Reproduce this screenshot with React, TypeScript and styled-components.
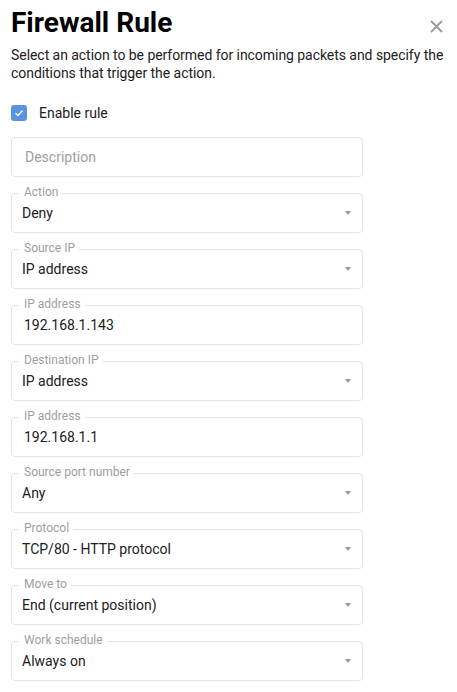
import React from "react";
import styled, { createGlobalStyle } from "styled-components";

const Global = createGlobalStyle`
  html, body { margin: 0; padding: 0; background: #fff; }
  body { font-family: Roboto, "Liberation Sans", Arial, sans-serif; color: #212121; }
  * { box-sizing: border-box; }
`;

const Page = styled.div`
  padding: 5px 14px 12px 11px;
  display: flex;
  flex-direction: column;
`;

const Header = styled.div`
  display: flex;
  justify-content: space-between;
  align-items: center;
`;

const Title = styled.h1`
  margin: 0;
  font-size: 28px;
  line-height: 36px;
  font-weight: 700;
  color: #000;
`;

const CloseButton = styled.button`
  border: none;
  background: none;
  padding: 0;
  width: 14px;
  height: 14px;
  margin-top: 6px;
  display: flex;
  align-items: center;
  justify-content: center;
  cursor: pointer;
`;

const Intro = styled.p`
  margin: 5px -14px 0 0;
  font-size: 14px;
  line-height: 18px;
  letter-spacing: -0.05px;
  color: #212121;
`;

const CheckRow = styled.label`
  display: flex;
  align-items: center;
  gap: 12px;
  height: 24px;
  margin-top: 19px;
  font-size: 14px;
  color: #212121;
`;

const CheckBox = styled.span`
  width: 16px;
  height: 16px;
  border-radius: 3px;
  background: #5b93e3;
  display: flex;
  align-items: center;
  justify-content: center;
`;

const Fields = styled.div`
  display: flex;
  flex-direction: column;
  gap: 16px;
  margin-top: 12px;
  width: 352px;
`;

const Box = styled.div<{ $inset?: number }>`
  position: relative;
  height: 40px;
  border: 1px solid #e4e4e4;
  border-radius: 4px;
  display: flex;
  align-items: center;
  padding: 0 10px 0 ${(p) => p.$inset ?? 10}px;
  font-size: 14px;
  color: #212121;
`;

const Legend = styled.span`
  position: absolute;
  top: -9px;
  left: 7px;
  padding: 0 4px 0 5px;
  background: #fff;
  font-size: 12px;
  line-height: 14px;
  color: #9e9e9e;
`;

const Value = styled.span`
  flex: 1;
`;

const Placeholder = styled.span`
  flex: 1;
  color: #9e9e9e;
`;

const Arrow = styled.span`
  width: 0;
  height: 0;
  border-left: 3px solid transparent;
  border-right: 3px solid transparent;
  border-top: 4px solid #9a9a9a;
  margin-right: 1px;
`;

type Field = { label: string; value: string; kind: "select" | "input" };

const fields: Field[] = [
  { label: "Action", value: "Deny", kind: "select" },
  { label: "Source IP", value: "IP address", kind: "select" },
  { label: "IP address", value: "192.168.1.143", kind: "input" },
  { label: "Destination IP", value: "IP address", kind: "select" },
  { label: "IP address", value: "192.168.1.1", kind: "input" },
  { label: "Source port number", value: "Any", kind: "select" },
  { label: "Protocol", value: "TCP/80 - HTTP protocol", kind: "select" },
  { label: "Move to", value: "End (current position)", kind: "select" },
  { label: "Work schedule", value: "Always on", kind: "select" },
];

export default function App() {
  return (
    <>
      <Global />
      <Page>
        <Header>
          <Title>Firewall Rule</Title>
          <CloseButton aria-label="Close">
            <svg width="13" height="13" viewBox="0 0 13 13">
              <path d="M1 1L12 12M12 1L1 12" stroke="#9a9a9a" strokeWidth="1.8" fill="none" />
            </svg>
          </CloseButton>
        </Header>
        <Intro>
          Select an action to be performed for incoming packets and specify the conditions that
          trigger the action.
        </Intro>
        <CheckRow>
          <CheckBox>
            <svg width="10" height="8" viewBox="0 0 10 8">
              <path d="M1.5 4.2L4 6.5L8.5 1.5" stroke="#fff" strokeWidth="1.3" fill="none" />
            </svg>
          </CheckBox>
          Enable rule
        </CheckRow>
        <Fields>
          <Box $inset={13}>
            <Placeholder>Description</Placeholder>
          </Box>
          {fields.map((f, i) => (
            <Box key={i} $inset={f.kind === "input" ? 12 : 10}>
              <Legend>{f.label}</Legend>
              <Value>{f.value}</Value>
              {f.kind === "select" && <Arrow />}
            </Box>
          ))}
        </Fields>
      </Page>
    </>
  );
}
